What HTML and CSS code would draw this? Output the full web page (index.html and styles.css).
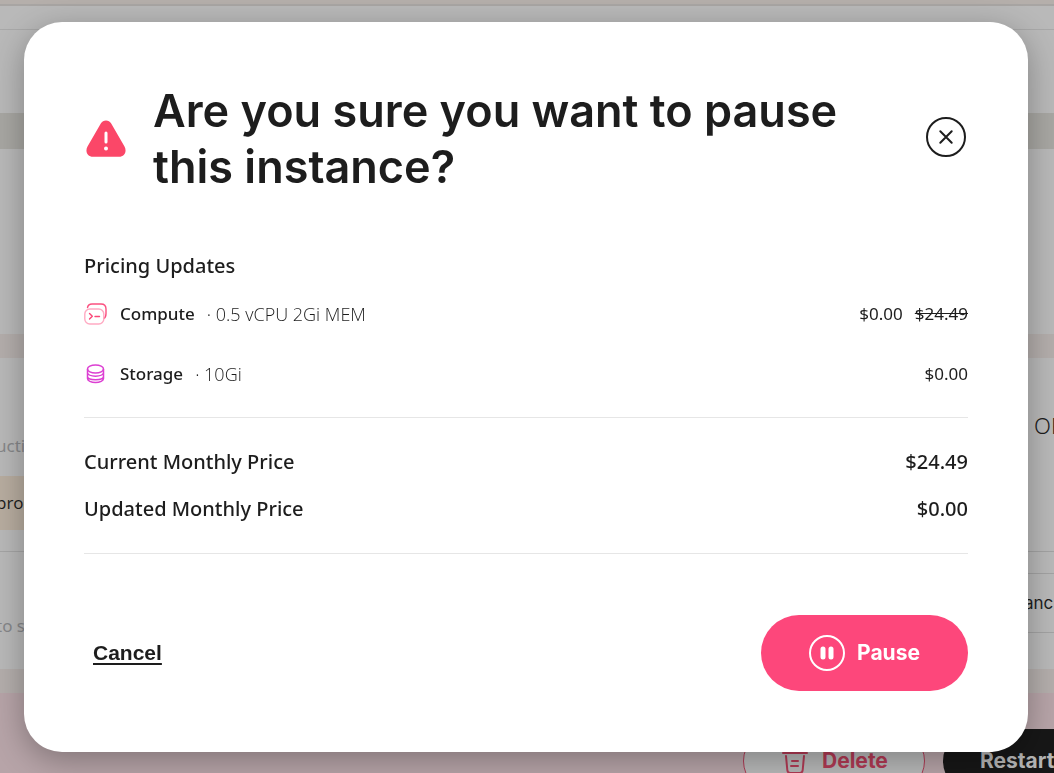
FILE: index.html
```html
<!DOCTYPE html>
<html lang="en">
<head>
<meta charset="utf-8">
<meta name="viewport" content="width=device-width, initial-scale=1">
<title>Pause instance</title>
<link rel="stylesheet" href="styles.css">
</head>
<body>
<div class="page" inert>
  <div class="strip strip-top"></div>
  <div class="strip strip-nav"></div>
  <div class="strip strip-panel"></div>
  <div class="strip strip-tabs"></div>
  <div class="strip strip-body"></div>
  <div class="strip strip-gap"></div>
  <div class="details">
    <div class="details-left">
      <p class="muted region">uctio</p>
      <p class="tag">prod</p>
      <p class="muted note">to s</p>
    </div>
    <div class="details-right">
      <p class="status">OP</p>
      <p class="field">anc</p>
    </div>
  </div>
  <div class="strip strip-gap"></div>
  <div class="actions">
    <button class="action delete" type="button">
      <svg width="26" height="26" viewBox="0 0 26 26" fill="none" stroke="currentColor" stroke-width="2" stroke-linecap="round"><path d="M1 5h24M8 4l1-3h8l1 3M4 8l1.300 14q.3 3 3 3h9.400q2.700 0 3-3L22 8M10 13h6M9 18h7"/></svg>
      Delete
    </button>
    <button class="action restart" type="button">Restart</button>
  </div>
</div>

<div class="overlay">
  <section class="modal" role="dialog" aria-modal="true" aria-labelledby="title">
    <header class="head">
      <svg class="warning" width="40" height="38" viewBox="0 0 40 38" aria-hidden="true"><path fill="#fb4768" d="M14.800 3.500C17-.4 23-.4 25.200 3.500L38.500 26.500C41.200 31.500 38.500 36.800 33 36.800H7C1.500 36.800-1.200 31.500 1.500 26.500Z"/><path d="M20 13v9" stroke="#fff" stroke-width="3" stroke-linecap="round"/><circle cx="20" cy="28.500" r="2" fill="#fff"/></svg>
      <h1 class="title" id="title">Are you sure you want to pause this instance?</h1>
      <button class="close" type="button" aria-label="Close">
        <svg width="40" height="40" viewBox="0 0 40 40" fill="none" stroke="currentColor" stroke-width="2" stroke-linecap="round"><circle cx="20" cy="20" r="19"/><path d="M14.300 14.300l11.400 11.400M25.700 14.300L14.300 25.700"/></svg>
      </button>
    </header>

    <h2 class="subtitle">Pricing Updates</h2>
    <ul class="items">
      <li class="row">
        <svg class="icon" width="24" height="24" viewBox="0 0 24 24" fill="none" stroke-width="1.400" stroke-linecap="round" stroke-linejoin="round" aria-hidden="true"><path stroke="#fb5080" d="M3.500 5.500C4 3 5.500 2 8 2h9c3.500 0 5 1.500 5 5v4.500c0 2.500-.4 4-2 4.800"/><rect x=".8" y="7" width="19" height="15" rx="5" stroke="#ffabc3"/><path stroke="#fb4778" d="M5.500 11.500l2.800 2.800-2.800 2.800M11 14.500h4.500"/></svg>
        <span class="name">Compute</span>
        <span class="spec">· 0.5 vCPU 2Gi MEM</span>
        <span class="price">$0.00</span>
        <s class="old">$24.49</s>
      </li>
      <li class="row">
        <svg class="icon" width="24" height="24" viewBox="0 0 24 24" fill="none" stroke="#dc3fd2" stroke-width="1.500" aria-hidden="true"><ellipse cx="11.500" cy="7" rx="8" ry="4"/><path d="M3.500 7v9.500c0 2.200 3.600 4 8 4s8-1.800 8-4V7M3.500 10.500c0 2.200 3.600 3.700 8 3.700s8-1.500 8-3.700M3.500 14.500c0 2.200 3.600 3.200 8 3.200s8-1 8-3.200"/></svg>
        <span class="name">Storage</span>
        <span class="spec">· 10Gi</span>
        <span class="price">$0.00</span>
      </li>
    </ul>

    <dl class="totals">
      <div class="total"><dt>Current Monthly Price</dt><dd>$24.49</dd></div>
      <div class="total"><dt>Updated Monthly Price</dt><dd>$0.00</dd></div>
    </dl>

    <footer class="foot">
      <button class="cancel" type="button">Cancel</button>
      <button class="pause" type="button">
        <svg width="36" height="36" viewBox="0 0 36 36" fill="none" stroke="currentColor" aria-hidden="true"><circle cx="18" cy="18" r="17" stroke-width="2"/><path d="M14 14v8M22 14v8" stroke-width="5" stroke-linecap="round"/></svg>
        Pause
      </button>
    </footer>
  </section>
</div>
</body>
</html>
```
FILE: styles.css
```css
* { box-sizing: border-box; }
body, h1, h2, p, ul, dl, dd { margin: 0; padding: 0; }
body {
  font-family: "Noto Sans", "Open Sans", sans-serif;
  color: #1d1d1d;
  overflow: hidden;
}
button {
  border: 0;
  padding: 0;
  background: none;
  color: inherit;
}
svg { display: block; flex: none; }

.page {
  display: flex;
  flex-direction: column;
  height: 100vh;
  overflow: hidden;
  background: #b9b9b9;
}
.strip { flex: none; }
.strip-top { height: 6px; background: #b5afab; border-bottom: 2px solid #a8a5a3; }
.strip-nav { height: 24px; border-bottom: 1px solid #a8a8a8; }
.strip-panel { height: 83px; }
.strip-tabs { height: 36px; background: #a8a7a3; }
.strip-body { height: 185px; }
.strip-gap { height: 24px; background: #b4aeac; }

.details {
  display: flex;
  flex: none;
  justify-content: space-between;
  height: 311px;
  font-size: 17px;
  line-height: 28px;
}
.details-left { width: 60px; text-indent: -4px; }
.details-right { width: 30px; white-space: nowrap; }
.muted { color: #868789; }
.region { padding: 74px 0 16px; }
.tag {
  height: 54px;
  padding-top: 13px;
  background: #b8ada0;
  font-family: "Open Sans", sans-serif;
}
.note { margin-top: 21px; padding-top: 60px; border-top: 1px solid #a5a5a5; }
.status {
  height: 194px;
  padding: 53px 0 0 10px;
  border-bottom: 1px solid #a3a3a3;
  font-size: 22px;
  font-weight: 300;
}
.field {
  height: 60px;
  margin-top: 21px;
  padding-top: 15px;
  border: solid #a3a3a3;
  border-width: 1px 0;
  font-family: Inter, sans-serif;
}

.actions {
  display: flex;
  flex: 1;
  gap: 18px;
  justify-content: flex-end;
  padding-top: 36px;
  background: #b7a4a8;
}
.action {
  display: flex;
  flex: none;
  align-items: center;
  height: 64px;
  border-radius: 32px;
  font: 700 21px/26px Inter, sans-serif;
}
.delete {
  gap: 14px;
  width: 182px;
  padding-left: 38px;
  border: 1px solid #af3a54;
  background: #b8b9b9;
  color: #b23a54;
}
.restart {
  width: 160px;
  margin-right: -49px;
  padding-left: 37px;
  background: #171717;
  color: #b5b5b5;
}

.overlay {
  position: fixed;
  inset: 0;
  padding: 22px 26px 21px 24px;
}
.modal {
  padding: 61px 60px;
  border-radius: 38px;
  background: #fff;
  box-shadow: 0 8px 32px rgba(0, 0, 0, 0.3);
}
.head { display: flex; align-items: center; }
.warning { margin: 0 27px 0 2px; }
.title {
  flex: 1;
  font: 600 45px/56px Inter, sans-serif;
}
.close { margin: 0 2px 4px 80px; border-radius: 50%; }

.subtitle {
  margin-top: 57px;
  font-size: 20px;
  font-weight: 500;
  line-height: 28px;
}
.items {
  display: grid;
  gap: 32px;
  padding: 20px 0 29px;
  border-bottom: 1px solid #e6e6e6;
  list-style: none;
}
.row { display: flex; align-items: center; font-size: 17px; line-height: 28px; }
.name { margin: 0 12px; font-weight: 500; }
.spec { font-family: "Open Sans", sans-serif; font-size: 18px; font-weight: 300; }
.price { margin-left: auto; }
.old { margin-left: 12px; }

.totals {
  display: grid;
  gap: 19px;
  padding: 30px 0;
  border-bottom: 1px solid #e6e6e6;
  font-size: 20px;
  font-weight: 500;
  line-height: 28px;
}
.total { display: flex; justify-content: space-between; }

.foot {
  display: flex;
  align-items: center;
  justify-content: space-between;
  margin-top: 61px;
}
.cancel {
  margin-left: 9px;
  font: 700 21px/28px "Liberation Sans", Arial, sans-serif;
  text-decoration: underline;
  text-decoration-thickness: 2px;
  text-underline-offset: 3px;
}
.pause {
  display: flex;
  align-items: center;
  justify-content: center;
  gap: 12px;
  width: 207px;
  height: 76px;
  border-radius: 38px;
  background: #fd477b;
  color: #fff;
  font: 700 21px/28px Inter, sans-serif;
}
```
